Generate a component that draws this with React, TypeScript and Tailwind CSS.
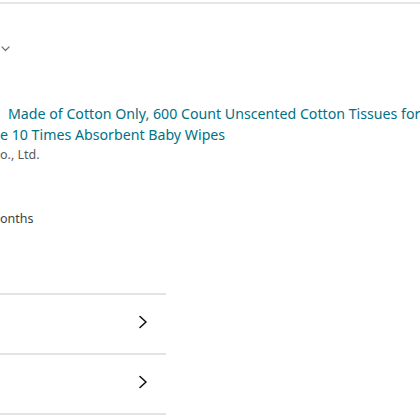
import React from "react";

function ChevronRight() {
  return (
    <svg width="10" height="14" viewBox="0 0 10 14" fill="none" className="text-[#0f1111]">
      <path d="M2 1.5 L8 7 L2 12.5" stroke="currentColor" strokeWidth="1.6" strokeLinecap="round" strokeLinejoin="round" />
    </svg>
  );
}

export default function App() {
  return (
    <div className="w-[420px] h-[420px] overflow-hidden bg-white font-['Noto_Sans','Open_Sans',sans-serif]">
      {/* top rule */}
      <div className="mt-[2px] h-[2px] w-full bg-[#e6e6e6]" />

      {/* collapsed selector */}
      <div className="mt-[42px] h-[8px] pl-[1px]">
        <svg width="9" height="6" viewBox="0 0 9 6" fill="none" className="text-[#6f7373]">
          <path d="M1 1 L4.5 4.5 L8 1" stroke="currentColor" strokeWidth="1.2" strokeLinecap="round" strokeLinejoin="round" />
        </svg>
      </div>

      {/* product title */}
      <div className="mt-[49px] text-[14.2px] leading-[21px] text-[#007185] whitespace-nowrap">
        <div className="pl-[8px]">Made of Cotton Only, 600 Count Unscented Cotton Tissues for</div>
        <div>e 10 Times Absorbent Baby Wipes</div>
      </div>
      <div className="mt-[1px] text-[12.5px] leading-[18px] text-[#565959]">o., Ltd.</div>

      <div className="mt-[46px] text-[12.5px] leading-[18px] text-[#3c3f3f]">onths</div>

      {/* rows */}
      <div className="mt-[65px] w-[166px]">
        {[0, 1].map((i) => (
          <div key={i} className="h-[60px] border-t-2 border-[#e3e3e3] flex items-center justify-end pr-[18px] pb-[4px]">
            <ChevronRight />
          </div>
        ))}
        <div className="border-t-2 border-[#e3e3e3]" />
      </div>
    </div>
  );
}
